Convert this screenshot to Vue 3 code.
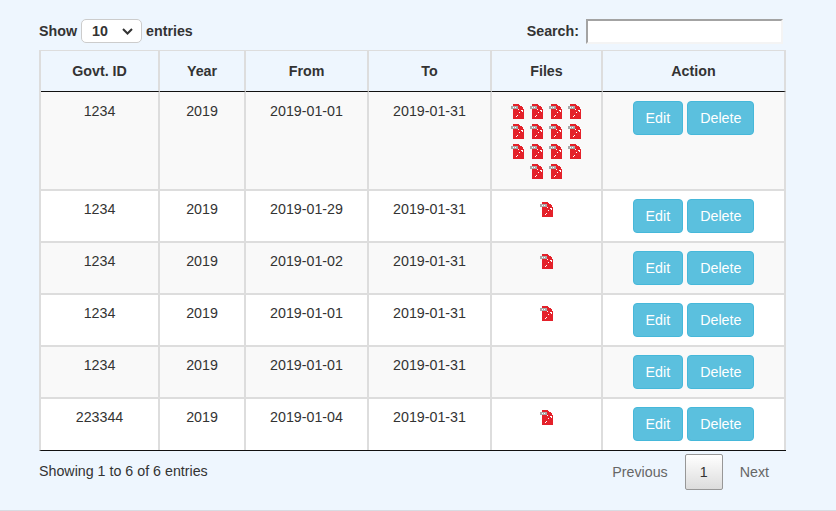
<script setup>
const rows = [
  { id: "1234", year: "2019", from: "2019-01-01", to: "2019-01-31", files: 14 },
  { id: "1234", year: "2019", from: "2019-01-29", to: "2019-01-31", files: 1 },
  { id: "1234", year: "2019", from: "2019-01-02", to: "2019-01-31", files: 1 },
  { id: "1234", year: "2019", from: "2019-01-01", to: "2019-01-31", files: 1 },
  { id: "1234", year: "2019", from: "2019-01-01", to: "2019-01-31", files: 0 },
  { id: "223344", year: "2019", from: "2019-01-04", to: "2019-01-31", files: 1 },
];
</script>

<template>
  <div class="page">
    <div class="top">
      <label class="length">
        Show
        <span class="select-wrap">
          <select>
            <option>10</option>
            <option>25</option>
            <option>50</option>
            <option>100</option>
          </select>
          <svg class="chevron" width="11" height="7" viewBox="0 0 11 7">
            <path d="M1 1l4.5 4.5L10 1" fill="none" stroke="#333" stroke-width="2" />
          </svg>
        </span>
        entries
      </label>
      <label class="search">
        Search:
        <input type="search" />
      </label>
    </div>

    <table>
      <colgroup>
        <col class="c-id" />
        <col class="c-year" />
        <col class="c-date" />
        <col class="c-date" />
        <col class="c-files" />
        <col class="c-action" />
      </colgroup>
      <thead>
        <tr>
          <th>Govt. ID</th>
          <th>Year</th>
          <th>From</th>
          <th>To</th>
          <th>Files</th>
          <th>Action</th>
        </tr>
      </thead>
      <tbody>
        <tr v-for="(row, i) in rows" :key="i">
          <td>{{ row.id }}</td>
          <td>{{ row.year }}</td>
          <td>{{ row.from }}</td>
          <td>{{ row.to }}</td>
          <td>
            <div v-if="row.files" class="files">
              <svg
                v-for="n in row.files"
                :key="n"
                class="pdf"
                width="13"
                height="15"
                viewBox="0 0 13 15"
                shape-rendering="crispEdges"
              >
                <path fill="#e4212a" d="M2 0h6v1h1v1h2v1h1v2h1v10H2z" />
                <path fill="#a9a9a9" d="M0 2h7v3H0z" />
                <path fill="#fff" d="M2 3h1v1H2zM4 3h1v1H4zM7 5h1v1H7zM10 6h2v2h-1v-1h-1zM8 8h1v1H8zM6 11h1v1H6zM5 12h1v1H5z" />
              </svg>
            </div>
          </td>
          <td>
            <div class="actions">
              <button class="btn">Edit</button>
              <button class="btn">Delete</button>
            </div>
          </td>
        </tr>
      </tbody>
    </table>

    <div class="bottom">
      <div class="info">Showing 1 to 6 of 6 entries</div>
      <div class="paging">
        <a>Previous</a>
        <a class="current">1</a>
        <a class="next">Next</a>
      </div>
    </div>
  </div>
</template>

<style scoped>
.page {
  box-sizing: border-box;
  height: 511px;
  padding: 19px 49px 0 39px;
  background: #eef6fe;
  border-bottom: 1px solid #d8dbe2;
  font: 14.25px/20px "Liberation Sans", Arial, sans-serif;
  color: #333;
}

.top {
  display: flex;
  justify-content: space-between;
  height: 31px;
  width: 744px;
}

label {
  font-weight: 700;
  display: flex;
  align-items: flex-start;
  line-height: 24px;
}

.select-wrap {
  position: relative;
  display: block;
  width: 61px;
  height: 24px;
  margin: 0 4px;
}

select {
  appearance: none;
  box-sizing: border-box;
  width: 61px;
  height: 24px;
  padding: 0 0 0 10px;
  font: 700 14.25px "Liberation Sans", Arial, sans-serif;
  color: #333;
  background: #fff;
  border: 1px solid #ccc;
  border-radius: 5px;
}

.chevron {
  position: absolute;
  top: 9px;
  left: 41px;
  pointer-events: none;
}

input {
  box-sizing: border-box;
  width: 197px;
  height: 25px;
  margin-left: 7px;
  background: #fff;
  border-style: solid;
  border-width: 2px;
  border-color: #a3a3a3 #f4f4f4 #f4f4f4 #a3a3a3;
  outline: none;
}

table {
  table-layout: fixed;
  box-sizing: border-box;
  width: 747px;
  border-collapse: separate;
  border-spacing: 0;
  border-top: 1px solid #ddd;
  border-left: 2px solid #ddd;
  border-bottom: 1px solid #111;
}

.c-id {
  width: 119px;
}

.c-year {
  width: 86px;
}

.c-date {
  width: 123px;
}

.c-files {
  width: 111px;
}

.c-action {
  width: 183px;
}

th,
td {
  padding: 8px;
  text-align: center;
  vertical-align: top;
  border-right: 2px solid #ddd;
  border-bottom: 2px solid #ddd;
}

th {
  padding: 10px 8px;
  border-bottom: 1px solid #111;
  font-weight: 700;
}

tbody tr:first-child td {
  padding-top: 9px;
}

tbody tr:last-child td {
  padding-bottom: 9px;
  border-bottom: 0;
}

tbody tr:nth-child(odd) {
  background: #f9f9f9;
}

tbody tr:nth-child(even) {
  background: #fff;
}

.files {
  display: flex;
  flex-wrap: wrap;
  justify-content: center;
  gap: 5px 6px;
  box-sizing: border-box;
  width: 77px;
  padding-right: 1px;
  margin: 3px auto 2px;
}

.actions {
  display: flex;
  justify-content: center;
  gap: 4px;
}

.btn {
  height: 34px;
  padding: 6px 12px;
  font: 14.25px/20px "Liberation Sans", Arial, sans-serif;
  color: #fff;
  background: #5bc0de;
  border: 1px solid #46b8da;
  border-radius: 4px;
}

.bottom {
  display: flex;
  justify-content: space-between;
  width: 746px;
}

.info {
  padding-top: 10px;
}

.paging {
  display: flex;
  align-items: center;
  padding-top: 3px;
}

.paging a {
  padding: 8px 17px;
  color: #666;
}

.paging .next {
  padding-right: 16px;
}

.paging .current {
  box-sizing: border-box;
  width: 38px;
  height: 36px;
  padding: 7px 0;
  text-align: center;
  color: #333;
  border: 1px solid #979797;
  border-radius: 2px;
  background: linear-gradient(to bottom, #fff 0%, #dcdcdc 100%);
}
</style>
